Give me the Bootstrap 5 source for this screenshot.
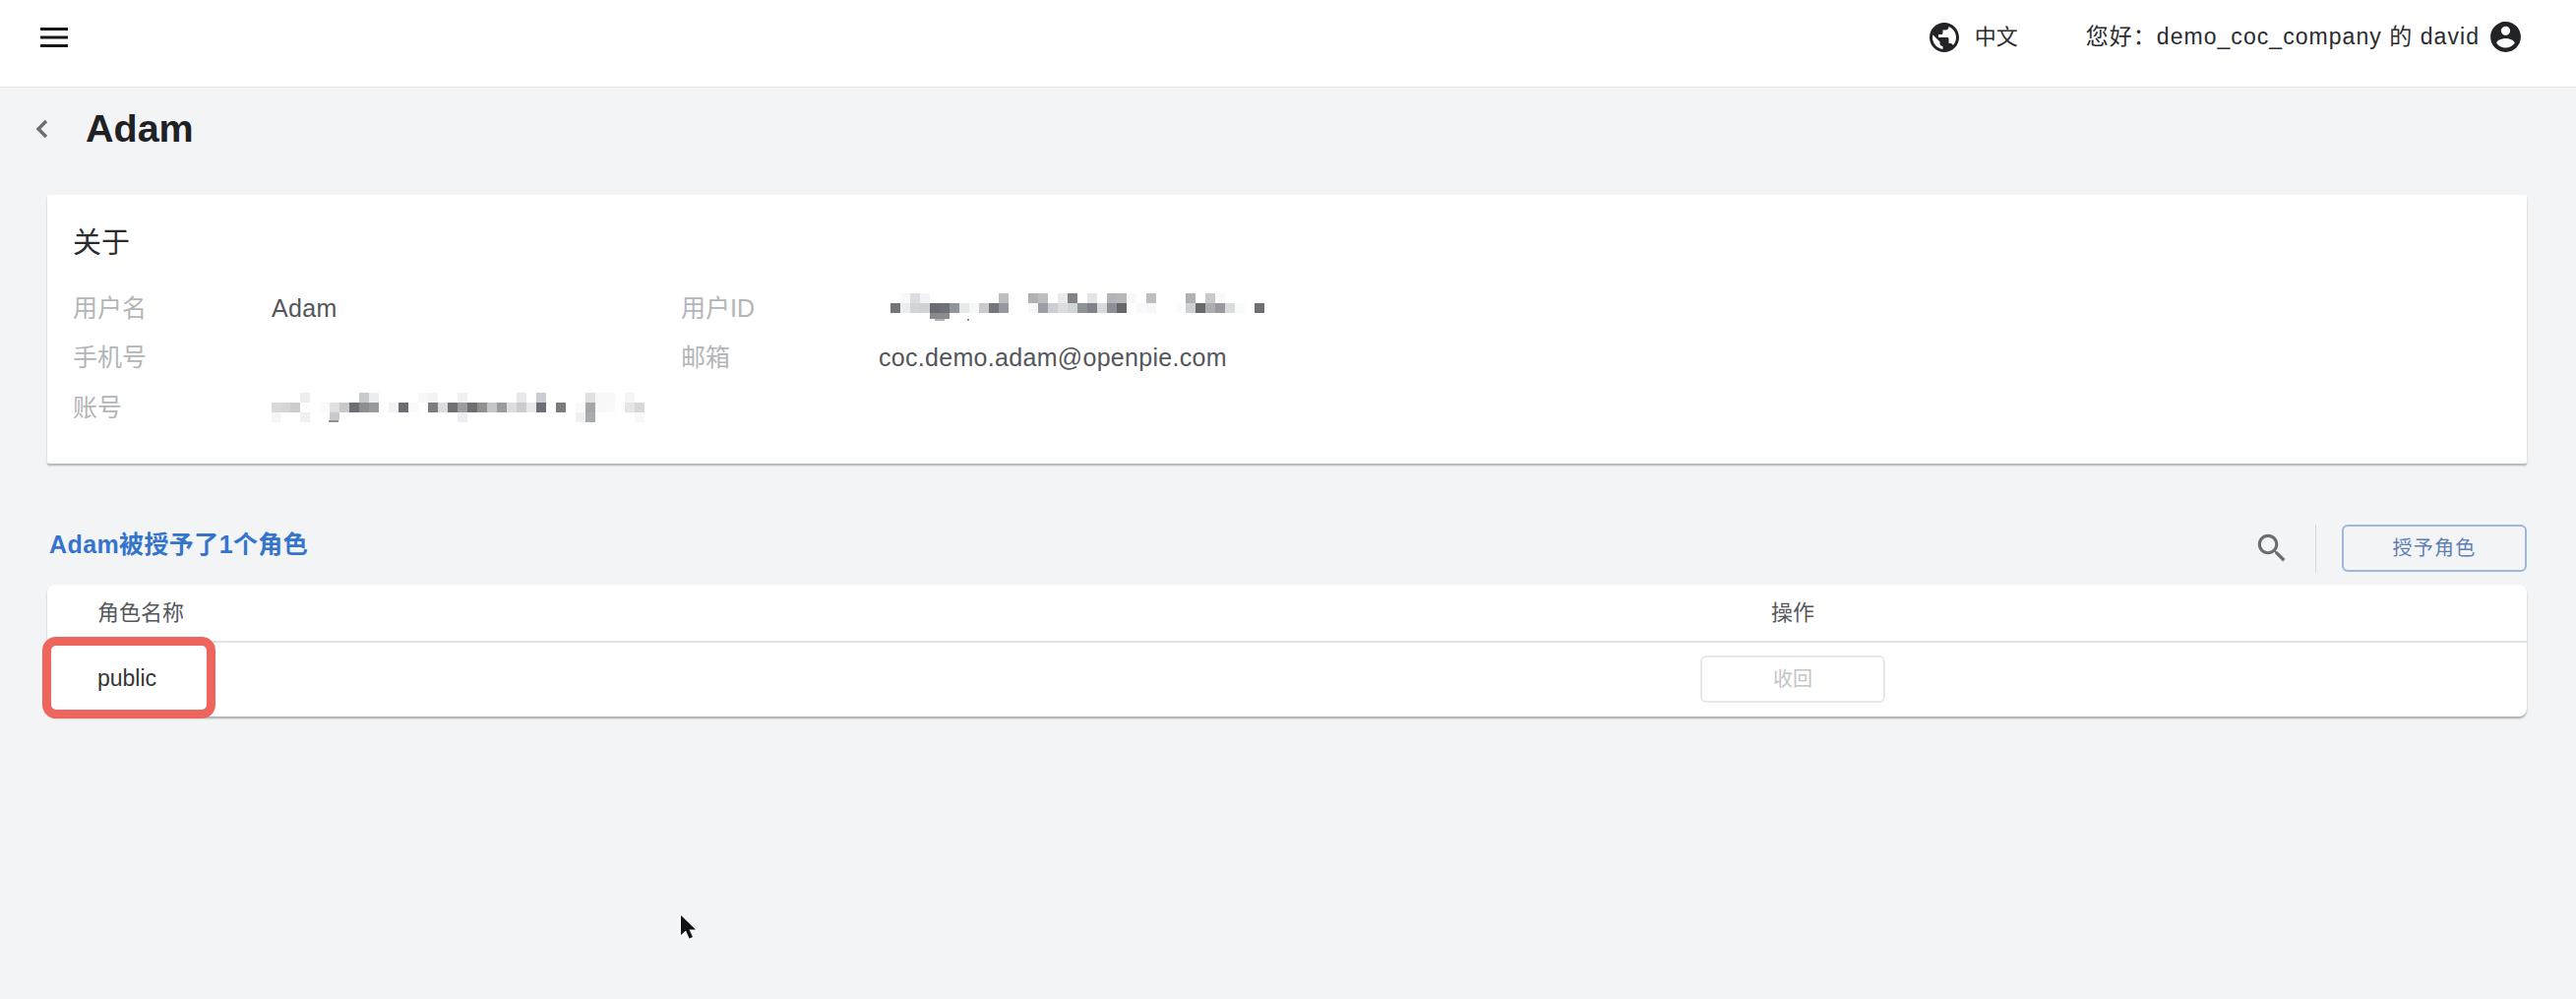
<!DOCTYPE html>
<html lang="zh">
<head>
<meta charset="utf-8">
<title>Adam</title>
<link href="https://cdn.jsdelivr.net/npm/bootstrap@5.3.0/dist/css/bootstrap.min.css" rel="stylesheet">
<style>
html,body{height:100%}
body{background:#f3f4f6;font-family:"Liberation Sans","Noto Sans CJK SC",sans-serif;color:#212326;position:relative;overflow:hidden}
.topbar{height:89px;background:#fff;border-bottom:1px solid #e3e4e6;padding:0 53px 13px 41px}
.burger{width:28px;height:20px;display:block}
.lang-icon{width:36px;height:36px;margin-right:13px}
.lang-text{font-size:22px;margin-right:69px;color:#2a2c2f}
.greet{font-size:23px;letter-spacing:1.05px;color:#2a2c2f}
.user-icon{width:37px;height:37px;margin-left:8px}
.page-head{height:109px;padding:0 0 25px 36px}
.back{width:13px;height:20px;margin-right:38px}
.page-name{font-size:39.5px;font-weight:700;margin:0;color:#1f2124;line-height:1}
.content{padding:0 50px 0 48px}
.about{height:273px;border:0;border-radius:2px;background:#fff;box-shadow:0 2px 2px rgba(0,0,0,.28);padding:29px 26px 0}
.about-title{font-size:29px;font-weight:400;line-height:40px;margin:0 0 21px;color:#2a2c2f}
.info{display:grid;grid-template-columns:202px 416px 201px 1fr;grid-auto-rows:50.5px;align-items:center;font-size:25px}
.info-label{color:#b4b5b8}
.info-value{color:#54565b;font-size:25px;letter-spacing:.3px}
.mosaic{display:block}
.bar{height:48px;margin-top:62px;margin-bottom:13px}
.bar-title{font-size:25px;letter-spacing:.4px;font-weight:700;color:#3574cd;margin:0;padding:0 0 8px 2px}
.search{width:38px;height:38px;margin-right:25px}
.divider{width:1px;height:49px;background:#d6d8da;margin-right:26px}
.grant{width:188px;height:48px;padding:0;font-size:20px;letter-spacing:1.3px;color:#5d7fb4;background:transparent;border:2px solid #9db6da;border-radius:6px;line-height:1}
.grant:hover{color:#5d7fb4;background:transparent;border-color:#9db6da}
.tablebox{position:relative;height:134px;background:#fff;border-radius:8px;box-shadow:0 2px 2px rgba(0,0,0,.3)}
.roles{margin:0;table-layout:fixed;--bs-table-bg:transparent}
.roles th,.roles td{border:0;padding:0;vertical-align:middle}
.roles th{height:58px;font-size:22px;font-weight:400;color:#55575b;border-bottom:2px solid #e1e2e4}
.roles td{height:74px;font-size:23px;color:#333538}
.first-col{width:1028px;padding-left:51px!important}
.revoke{width:188px;height:48px;padding:0;font-size:20px;color:#c4c5c7;background:#fff;border:2px solid #e7e8ea;border-radius:6px;line-height:1}
.revoke:disabled{color:#c4c5c7;background:#fff;border-color:#e7e8ea;opacity:1}
.callout{position:absolute;left:-5px;top:53px;width:176px;height:83px;border:9px solid #ee655e;border-radius:14px;pointer-events:none}
.pointer{position:absolute;left:685px;top:925px;width:26px;height:34px}
</style>
</head>
<body>
<nav class="navbar topbar d-flex align-items-center justify-content-between flex-nowrap">
  <svg class="burger" viewBox="0 0 28 20" aria-hidden="true"><path d="M0 1.5h28M0 10h28M0 18.5h28" stroke="#16171a" stroke-width="3"/></svg>
  <div class="d-flex align-items-center">
    <svg class="lang-icon" viewBox="0 0 24 24" fill="#212326" aria-hidden="true"><path d="M12 2C6.48 2 2 6.48 2 12s4.48 10 10 10 10-4.48 10-10S17.52 2 12 2zm-1 17.93c-3.95-.49-7-3.85-7-7.93 0-.62.08-1.21.21-1.79L9 15v1c0 1.1.9 2 2 2v1.93zm6.9-2.54c-.26-.81-1-1.39-1.9-1.39h-1v-3c0-.55-.45-1-1-1H8v-2h2c.55 0 1-.45 1-1V7h2c1.1 0 2-.9 2-2v-.41c2.93 1.19 5 4.06 5 7.41 0 2.08-.8 3.97-2.1 5.39z"/></svg>
    <span class="lang-text">中文</span>
    <span class="greet">您好：demo_coc_company 的 david</span>
    <svg class="user-icon" viewBox="0 0 24 24" fill="#212326" aria-hidden="true"><path d="M12 2C6.48 2 2 6.48 2 12s4.48 10 10 10 10-4.48 10-10S17.52 2 12 2zm0 3c1.66 0 3 1.34 3 3s-1.34 3-3 3-3-1.34-3-3 1.34-3 3-3zm0 14.2c-2.5 0-4.71-1.28-6-3.22.03-1.99 4-3.08 6-3.08 1.99 0 5.97 1.09 6 3.08-1.29 1.94-3.5 3.22-6 3.22z"/></svg>
  </div>
</nav>

<header class="page-head d-flex align-items-center">
  <svg class="back" viewBox="0 0 13 20" aria-hidden="true"><path d="M11 2 3 10l8 8" fill="none" stroke="#6b6d72" stroke-width="3.4"/></svg>
  <h1 class="page-name">Adam</h1>
</header>

<main class="content">
  <section class="card about">
    <h2 class="about-title">关于</h2>
    <div class="info">
      <div class="info-label">用户名</div>
      <div class="info-value">Adam</div>
      <div class="info-label">用户ID</div>
      <svg class="mosaic" width="420" height="36" viewBox="893 296 420 36" aria-hidden="true">
        <g shape-rendering="crispEdges">
          <g>
            <rect x="915" y="299" width="10" height="10" fill="#f8f8f9"/><rect x="925" y="299" width="10" height="10" fill="#dcdde0"/><rect x="935" y="299" width="10" height="10" fill="#f2f3f5"/><rect x="1015" y="299" width="10" height="10" fill="#bcbdbf"/><rect x="1045" y="299" width="10" height="10" fill="#b0b1b3"/><rect x="1055" y="299" width="10" height="10" fill="#bcbdbf"/><rect x="1075" y="299" width="10" height="10" fill="#e9eaec"/><rect x="1085" y="299" width="10" height="10" fill="#828388"/><rect x="1105" y="299" width="10" height="10" fill="#e3e4e6"/><rect x="1125" y="299" width="10" height="10" fill="#b3b4b7"/><rect x="1135" y="299" width="10" height="10" fill="#b6b7ba"/><rect x="1145" y="299" width="10" height="10" fill="#f8f8f8"/><rect x="1165" y="299" width="10" height="10" fill="#bdbec0"/><rect x="1205" y="299" width="10" height="10" fill="#b0b1b3"/><rect x="1225" y="299" width="10" height="10" fill="#c8c9cc"/><rect x="1235" y="299" width="10" height="10" fill="#fbf8f9"/>
          </g>
          <g>
            <rect x="905" y="309" width="10" height="10" fill="#72757b"/><rect x="915" y="309" width="10" height="10" fill="#ecedee"/><rect x="925" y="309" width="10" height="10" fill="#d2d4d6"/><rect x="935" y="309" width="10" height="10" fill="#d0d1d3"/><rect x="945" y="309" width="10" height="10" fill="#6a6b70"/><rect x="955" y="309" width="10" height="10" fill="#6e7075"/><rect x="965" y="309" width="10" height="10" fill="#8f9598"/><rect x="975" y="309" width="10" height="10" fill="#e6e9e9"/><rect x="985" y="309" width="10" height="10" fill="#f6f7f6"/><rect x="995" y="309" width="10" height="10" fill="#c9cacc"/><rect x="1005" y="309" width="10" height="10" fill="#75767c"/><rect x="1015" y="309" width="10" height="10" fill="#96979b"/><rect x="1045" y="309" width="10" height="10" fill="#f7f7f9"/><rect x="1055" y="309" width="10" height="10" fill="#9b9fa3"/><rect x="1065" y="309" width="10" height="10" fill="#cdced2"/><rect x="1075" y="309" width="10" height="10" fill="#dcdde0"/><rect x="1085" y="309" width="10" height="10" fill="#cfd6d8"/><rect x="1095" y="309" width="10" height="10" fill="#8d9396"/><rect x="1105" y="309" width="10" height="10" fill="#7f8288"/><rect x="1115" y="309" width="10" height="10" fill="#d8d9da"/><rect x="1125" y="309" width="10" height="10" fill="#8e8f94"/><rect x="1135" y="309" width="10" height="10" fill="#66676d"/><rect x="1155" y="309" width="10" height="10" fill="#f8f9fa"/><rect x="1165" y="309" width="10" height="10" fill="#f5f6f7"/><rect x="1195" y="309" width="10" height="10" fill="#fafbfb"/><rect x="1205" y="309" width="10" height="10" fill="#cfd0d1"/><rect x="1215" y="309" width="10" height="10" fill="#68696c"/><rect x="1225" y="309" width="10" height="10" fill="#acadaf"/><rect x="1235" y="309" width="10" height="10" fill="#98999f"/><rect x="1245" y="309" width="10" height="10" fill="#dadbdd"/><rect x="1255" y="309" width="10" height="10" fill="#f9fafa"/><rect x="1275" y="309" width="10" height="10" fill="#6e6e76"/>
          </g>
          <rect x="945" y="319" width="20" height="6" fill="#8a8b8f"/><rect x="950" y="325" width="10" height="2" fill="#b0b1b3"/><rect x="983" y="325" width="2" height="2" fill="#8a8b8f"/>
        </g>
      </svg>
      <div class="info-label">手机号</div>
      <div class="info-value"></div>
      <div class="info-label">邮箱</div>
      <div class="info-value">coc.demo.adam@openpie.com</div>
      <div class="info-label">账号</div>
      <svg class="mosaic acct" width="400" height="36" viewBox="276 396 400 36" aria-hidden="true">
        <g shape-rendering="crispEdges">
          <g>
            <rect x="305" y="399" width="10" height="10" fill="#eeeef0"/><rect x="365" y="399" width="10" height="10" fill="#c8c9cb"/><rect x="375" y="399" width="10" height="10" fill="#ecedee"/><rect x="425" y="399" width="10" height="10" fill="#f8f8f8"/><rect x="435" y="399" width="10" height="10" fill="#f3f3f4"/><rect x="465" y="399" width="10" height="10" fill="#f0f0f1"/><rect x="525" y="399" width="10" height="10" fill="#e8e8ea"/><rect x="545" y="399" width="10" height="10" fill="#cbccd0"/><rect x="595" y="399" width="10" height="10" fill="#e0e0e1"/><rect x="605" y="399" width="10" height="10" fill="#f8f8f8"/><rect x="615" y="399" width="10" height="10" fill="#f8f8f8"/><rect x="635" y="399" width="10" height="10" fill="#f5f5f7"/>
          </g>
          <g>
            <rect x="275" y="409" width="10" height="10" fill="#d8d9da"/><rect x="285" y="409" width="10" height="10" fill="#d5d6d6"/><rect x="295" y="409" width="10" height="10" fill="#cbcccd"/><rect x="325" y="409" width="10" height="10" fill="#fafafa"/><rect x="335" y="409" width="10" height="10" fill="#e0e0e2"/><rect x="345" y="409" width="10" height="10" fill="#c8c9cb"/><rect x="355" y="409" width="10" height="10" fill="#6e6f76"/><rect x="365" y="409" width="10" height="10" fill="#8b8e92"/><rect x="375" y="409" width="10" height="10" fill="#989a9c"/><rect x="395" y="409" width="10" height="10" fill="#f3f3f4"/><rect x="405" y="409" width="10" height="10" fill="#6c6d74"/><rect x="415" y="409" width="10" height="10" fill="#f8f9f8"/><rect x="435" y="409" width="10" height="10" fill="#7b7c82"/><rect x="445" y="409" width="10" height="10" fill="#dcdcdf"/><rect x="455" y="409" width="10" height="10" fill="#6e7073"/><rect x="465" y="409" width="10" height="10" fill="#9a9ca0"/><rect x="475" y="409" width="10" height="10" fill="#6d6e70"/><rect x="485" y="409" width="10" height="10" fill="#8f9092"/><rect x="495" y="409" width="10" height="10" fill="#c5c6c8"/><rect x="505" y="409" width="10" height="10" fill="#989ba0"/><rect x="515" y="409" width="10" height="10" fill="#dcdde0"/><rect x="525" y="409" width="10" height="10" fill="#cbcccd"/><rect x="535" y="409" width="10" height="10" fill="#e8e9eb"/><rect x="545" y="409" width="10" height="10" fill="#6c6f7a"/><rect x="565" y="409" width="10" height="10" fill="#7a7d7d"/><rect x="585" y="409" width="10" height="10" fill="#fafafa"/><rect x="595" y="409" width="10" height="10" fill="#a4a6a8"/><rect x="605" y="409" width="10" height="10" fill="#f8f8f8"/><rect x="615" y="409" width="10" height="10" fill="#f9f9f9"/><rect x="635" y="409" width="10" height="10" fill="#e5e5e6"/><rect x="645" y="409" width="10" height="10" fill="#d6d7d9"/>
          </g>
          <g>
            <rect x="275" y="419" width="10" height="10" fill="#f4f5f6"/><rect x="305" y="419" width="10" height="10" fill="#f0f0f2"/><rect x="335" y="419" width="10" height="8" fill="#c9cacc"/><rect x="334" y="427" width="10" height="2" fill="#909194"/><rect x="465" y="419" width="10" height="10" fill="#eeeef0"/><rect x="585" y="419" width="10" height="10" fill="#eff0f2"/><rect x="595" y="419" width="10" height="10" fill="#a9abad"/><rect x="645" y="419" width="10" height="10" fill="#f8f8f9"/>
          </g>
        </g>
      </svg>
    </div>
  </section>

  <div class="bar d-flex align-items-center">
    <h2 class="bar-title me-auto">Adam被授予了1个角色</h2>
    <svg class="search" viewBox="0 0 24 24" fill="#6b6d70" aria-hidden="true"><path d="M15.5 14h-.79l-.28-.27C15.41 12.59 16 11.11 16 9.5 16 5.91 13.09 3 9.5 3S3 5.91 3 9.5 5.91 16 9.5 16c1.61 0 3.09-.59 4.23-1.57l.27.28v.79l5 4.99L20.49 19l-4.99-5zm-6 0C7.01 14 5 11.99 5 9.5S7.01 5 9.5 5 14 7.01 14 9.5 11.99 14 9.5 14z"/></svg>
    <div class="divider"></div>
    <button type="button" class="btn grant">授予角色</button>
  </div>

  <div class="tablebox">
    <table class="table roles">
      <thead>
        <tr><th class="first-col">角色名称</th><th class="text-center">操作</th></tr>
      </thead>
      <tbody>
        <tr><td class="first-col">public</td><td class="text-center"><button type="button" class="btn revoke" disabled>收回</button></td></tr>
      </tbody>
    </table>
    <div class="callout"></div>
  </div>
</main>

<svg class="pointer" viewBox="0 0 26 34" aria-hidden="true"><path d="M7 5v20l5-4.5 3.5 8 3.5-1.5-3.5-7.5H22z" fill="#111" stroke="#fff" stroke-width="1.6" paint-order="stroke"/></svg>
</body>
</html>
